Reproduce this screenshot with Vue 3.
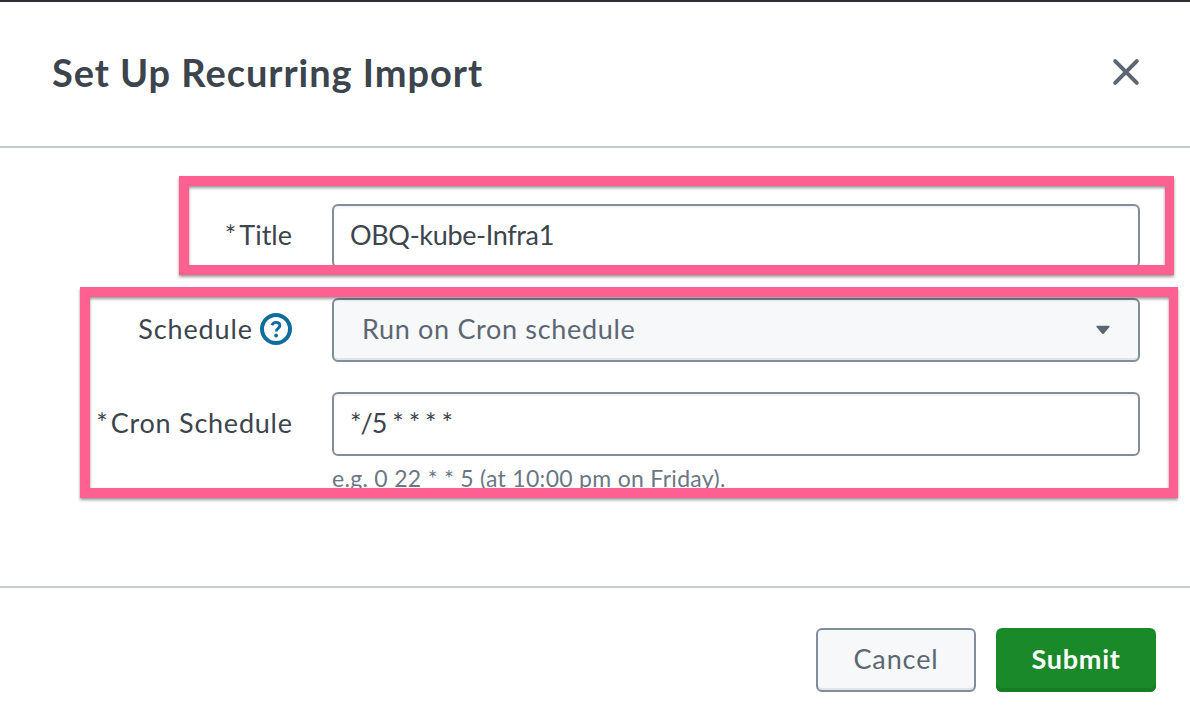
<script setup>
import { ref } from 'vue'

const title = ref('OBQ-kube-Infra1')
const cron = ref('*/5 * * * *')
</script>

<template>
  <div class="modal">
    <header class="header">
      <h1 class="heading">Set Up Recurring Import</h1>
      <button class="close" aria-label="Close">
        <svg width="28" height="28" viewBox="0 0 28 28">
          <path d="M3.2 3.2 24.8 24.8M24.8 3.2 3.2 24.8" fill="none" stroke="#5c6773" stroke-width="4" stroke-linecap="round" />
        </svg>
      </button>
    </header>

    <main class="body">
      <div class="row">
        <div class="label"><span class="star">*</span><span class="t-title">Title</span></div>
        <div class="field"><span class="v-title">{{ title }}</span></div>
      </div>
      <div class="row">
        <div class="label">
          <span class="t-schedule">Schedule</span>
          <svg class="help-icon" width="32" height="32" viewBox="0 0 32 32">
            <circle cx="16" cy="16" r="14" fill="#fff" stroke="#0f6ca0" stroke-width="4" />
            <path d="M12 12.2C12.6 10.4 14 9.3 16.1 9.3c2.3 0 3.8 1.3 3.8 3.1 0 3-3.7 2.8-3.7 6" fill="none" stroke="#0f6ca0" stroke-width="2.8" />
            <circle cx="16.1" cy="22.5" r="1.9" fill="#0f6ca0" />
          </svg>
        </div>
        <div class="field select">
          <span class="v-select">Run on Cron schedule</span>
          <svg width="14" height="10" viewBox="0 0 14 10">
            <path d="M1 .7h12q1 .3.5 1.2L8 8.6q-1 1-2 0L.5 1.9Q0 1 1 .7z" fill="#5c6773" />
          </svg>
        </div>
      </div>
      <div class="row">
        <div class="label"><span class="star">*</span><span class="t-cron">Cron Schedule</span></div>
        <div class="field"><span class="v-cron">{{ cron }}</span></div>
      </div>
      <p class="hint">e.g. 0 22 * * 5 (at 10:00 pm on Friday).</p>
    </main>

    <footer class="footer">
      <button class="btn cancel"><span>Cancel</span></button>
      <button class="btn submit"><span>Submit</span></button>
    </footer>

    <div class="mark mark-title"></div>
    <div class="mark mark-schedule"></div>
  </div>
</template>

<style>
body { background: #fff; }
</style>

<style scoped>
* { box-sizing: border-box; }
.modal {
  position: relative;
  display: flex;
  flex-direction: column;
  width: 1190px;
  height: 728px;
  overflow: hidden;
  border-top: 2px solid #2f2f38;
  background: #fff;
  color: #3c444d;
  font-family: Lato, "Liberation Sans", sans-serif;
  font-size: 27px;
  white-space: pre;
}
.header {
  display: flex;
  align-items: center;
  justify-content: space-between;
  height: 146px;
  padding: 0 50px 5px 52px;
  border-bottom: 2px solid #c4c9ce;
}
.heading { margin: 0; font-size: 38px; font-weight: 700; line-height: 46px; letter-spacing: 0.95px; }
.close { display: flex; padding: 0; border: 0; background: none; }
.body {
  display: flex;
  flex-direction: column;
  gap: 30px;
  height: 438px;
  padding: 56px 50px 0 0;
}
.row { display: flex; gap: 40px; height: 64px; flex: none; }
.label {
  display: flex;
  align-items: center;
  justify-content: flex-end;
  width: 292px;
  padding-bottom: 4px;
}
.star { margin-right: 3px; }
.t-schedule { letter-spacing: 0.9px; }
.t-cron { margin-right: -0.7px; letter-spacing: 0.75px; }
.help-icon { margin-left: 7px; position: relative; top: 1px; }
.field {
  display: flex;
  flex: 1;
  align-items: center;
  padding: 0 16px 4px;
  border: 2px solid #818d99;
  border-radius: 6px;
  background: #fff;
  box-shadow: inset 0 2px 2px #f1f3f6;
}
.v-title { letter-spacing: -0.35px; }
.v-cron { letter-spacing: -1px; }
.select {
  justify-content: space-between;
  padding: 0 28px 0 28px;
  background: #f7f8fa;
  color: #5c6773;
  box-shadow: inset 0 -2px 0 #e1e5eb;
}
.v-select { padding-bottom: 4px; letter-spacing: 0.68px; }
.hint { margin: -22px 0 0 332px; color: #6b7785; font-size: 23px; line-height: 28px; letter-spacing: 0.3px; }
.footer {
  display: flex;
  flex: 1;
  justify-content: flex-end;
  gap: 20px;
  padding: 40px 34px 0 0;
  border-top: 2px solid #c8cad3;
}
.btn {
  display: flex;
  align-items: center;
  justify-content: center;
  width: 160px;
  height: 64px;
  padding: 0 0 4px;
  border-radius: 6px;
  font: inherit;
  letter-spacing: 0.9px;
}
.cancel {
  border: 2px solid #818d99;
  background: #f7f8fa;
  color: #5c6773;
  box-shadow: inset 0 -2px 0 #e1e5eb;
}
.submit {
  border: 0;
  background: #1a8929;
  color: #fff;
  font-weight: 700;
  letter-spacing: 0.75px;
  box-shadow: inset 0 -4px 0 #187b25;
}
.mark {
  position: absolute;
  border: 10px solid #ff6092;
  border-right-width: 9px;
  filter: drop-shadow(0 2px 1.5px rgba(0, 0, 0, 0.4));
}
.mark-title { left: 179px; top: 174px; width: 995px; height: 99px; }
.mark-schedule { left: 80px; top: 285px; width: 1098px; height: 211px; }
</style>
